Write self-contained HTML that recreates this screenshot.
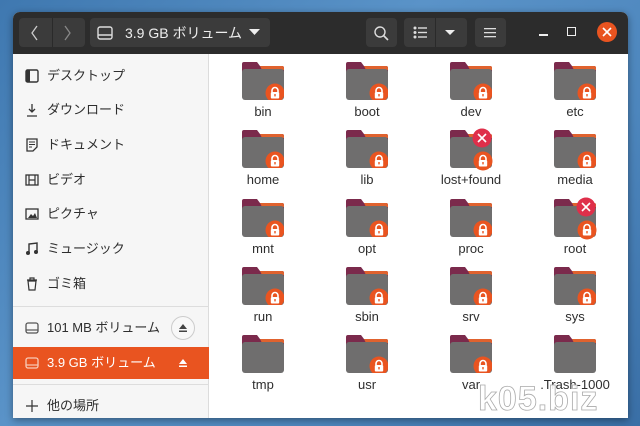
<!DOCTYPE html>
<html><head><meta charset="utf-8">
<style>
*{margin:0;padding:0;box-sizing:border-box}
body{width:640px;height:426px;overflow:hidden;background:linear-gradient(135deg,#3f78b0,#5a93c8 40%,#4d86bd 70%,#3a6fa6);font-family:"Liberation Sans","Noto Sans CJK JP",sans-serif;position:relative}
.win{position:absolute;left:13px;top:12px;width:615px;height:406px;border-radius:7px 7px 0 0;overflow:hidden;background:#fff;box-shadow:0 2px 8px rgba(0,0,0,.4)}
.hdr{position:absolute;left:0;top:0;width:615px;height:42px;background:#2c2c2c}
.btn{position:absolute;top:6px;height:29px;background:#3b3b3b;border-radius:4px}
.side{position:absolute;left:0;top:42px;width:196px;height:364px;background:#f6f6f6;border-right:1px solid #dcdcdc}
.it{position:absolute;left:0;width:196px;height:34px;font-size:13px;color:#2e2e2e;line-height:34px}
.it .t{position:absolute;left:34px}
.it svg{position:absolute;left:12px;top:10px}
.f{position:absolute;width:104px;text-align:center;font-size:13px;color:#2e2e2e}
.f svg{display:block;margin:0 auto 4px}
</style></head><body>
<svg width="0" height="0" style="position:absolute">
<symbol id="fo" viewBox="0 0 42 38">
<path d="M2 0h13l3 4h22a2 2 0 0 1 2 2v10H0V2a2 2 0 0 1 2-2z" fill="#7b2a4c"/>
<path d="M18 4h22a2 2 0 0 1 2 2v2H20z" fill="#e0622e"/>
<rect x="0" y="7" width="42" height="31" rx="3" fill="#6f6e6e"/>
</symbol>
<symbol id="lk" viewBox="0 0 20 20">
<circle cx="10" cy="10" r="9.5" fill="#e95420"/>
<path d="M7 9V7.5a3 3 0 0 1 6 0V9" stroke="#fff" stroke-width="1.6" fill="none"/>
<rect x="5.8" y="9" width="8.4" height="6.5" rx="1" fill="#fff"/>
<rect x="9.3" y="11" width="1.4" height="2.4" fill="#e95420"/>
</symbol>
<symbol id="xx" viewBox="0 0 20 20">
<circle cx="10" cy="10" r="9.5" fill="#df2f4a"/>
<path d="M6 6l8 8M14 6l-8 8" stroke="#fff" stroke-width="1.6"/>
</symbol>
</svg>
<div class="win">
<div class="hdr">
 <div class="btn" style="left:6px;width:66px"></div>
 <div style="position:absolute;left:39px;top:6px;width:1px;height:29px;background:#2a2a2a"></div>
 <svg style="position:absolute;left:17px;top:13px" width="10" height="16"><path d="M7 1L2 8l5 7" stroke="#ccc" stroke-width="1.3" fill="none"/></svg>
 <svg style="position:absolute;left:49px;top:13px" width="10" height="16"><path d="M3 1l5 7-5 7" stroke="#888" stroke-width="1.3" fill="none"/></svg>
 <div class="btn" style="left:77px;width:180px"></div>
 <svg style="position:absolute;left:84px;top:14px" width="16" height="14"><rect x="1" y="1" width="14" height="12" rx="2" stroke="#ddd" stroke-width="1.4" fill="none"/><path d="M1 9h14" stroke="#ddd" stroke-width="1.4"/></svg>
 <div style="position:absolute;left:112px;top:11px;color:#eee;font-size:14px">3.9 GB ボリューム</div>
 <svg style="position:absolute;left:236px;top:17px" width="11" height="7"><path d="M0 0h11L5.5 6z" fill="#eee"/></svg>
 <div class="btn" style="left:353px;width:31px"></div>
 <svg style="position:absolute;left:360px;top:13px" width="16" height="16"><circle cx="7" cy="7" r="5" stroke="#ddd" stroke-width="1.4" fill="none"/><path d="M10.5 10.5L15 15" stroke="#ddd" stroke-width="1.6"/></svg>
 <div class="btn" style="left:391px;width:63px"></div>
 <div style="position:absolute;left:422px;top:6px;width:1px;height:29px;background:#2a2a2a"></div>
 <svg style="position:absolute;left:400px;top:14px" width="14" height="13"><g fill="#ddd"><circle cx="2" cy="2" r="1.5"/><circle cx="2" cy="6.5" r="1.5"/><circle cx="2" cy="11" r="1.5"/><rect x="5" y="1.3" width="9" height="1.4"/><rect x="5" y="5.8" width="9" height="1.4"/><rect x="5" y="10.3" width="9" height="1.4"/></g></svg>
 <svg style="position:absolute;left:432px;top:18px" width="10" height="6"><path d="M0 0h10L5 5z" fill="#eee"/></svg>
 <div class="btn" style="left:462px;width:31px"></div>
 <svg style="position:absolute;left:471px;top:15px" width="12" height="11"><g fill="#ddd"><rect y="1" width="12" height="1.3"/><rect y="5" width="12" height="1.3"/><rect y="9" width="12" height="1.3"/></g></svg>
 <div style="position:absolute;left:526px;top:22px;width:9px;height:1.5px;background:#eee"></div>
 <div style="position:absolute;left:554px;top:15px;width:9px;height:9px;border:1.5px solid #eee"></div>
 <div style="position:absolute;left:584px;top:10px;width:20px;height:20px;border-radius:50%;background:#e95420"></div>
 <svg style="position:absolute;left:589px;top:15px" width="10" height="10"><path d="M1 1l8 8M9 1l-8 8" stroke="#fff" stroke-width="1.6"/></svg>
</div>
<div class="side">
 <div class="it" style="top:5px"><svg width="14" height="14"><rect x="1" y="1" width="12" height="12" rx="1.5" stroke="#333" stroke-width="1.4" fill="none"/><rect x="1" y="1" width="4" height="12" fill="#333"/></svg><span class="t">デスクトップ</span></div>
 <div class="it" style="top:39px"><svg width="14" height="14"><path d="M7 1v8M4 6l3 3 3-3M2 13h10" stroke="#333" stroke-width="1.3" fill="none"/></svg><span class="t">ダウンロード</span></div>
 <div class="it" style="top:74px"><svg width="14" height="14"><path d="M2 1h10v8l-4 4H2z" stroke="#333" stroke-width="1.3" fill="none"/><path d="M4 4h6M4 6.5h6M4 9h3" stroke="#333" stroke-width="1.1"/></svg><span class="t">ドキュメント</span></div>
 <div class="it" style="top:109px"><svg width="14" height="14"><rect x="1" y="2" width="12" height="10" stroke="#333" stroke-width="1.3" fill="none"/><path d="M4 2v10M10 2v10M4 7h6" stroke="#333" stroke-width="1.2"/></svg><span class="t">ビデオ</span></div>
 <div class="it" style="top:143px"><svg width="14" height="14"><rect x="1" y="2" width="12" height="10" stroke="#333" stroke-width="1.3" fill="none"/><path d="M3 11l3-4 2 2 2-3 2 5z" fill="#333"/></svg><span class="t">ピクチャ</span></div>
 <div class="it" style="top:178px"><svg width="14" height="14"><path d="M4 11V2l8-1v9" stroke="#333" stroke-width="1.4" fill="none"/><circle cx="3" cy="11" r="2" fill="#333"/><circle cx="11" cy="10" r="2" fill="#333"/></svg><span class="t">ミュージック</span></div>
 <div class="it" style="top:213px"><svg width="14" height="14"><path d="M3 4h8l-1 9H4zM2 3h10M5 3V1h4v2" stroke="#333" stroke-width="1.2" fill="none"/></svg><span class="t">ゴミ箱</span></div>
 <div style="position:absolute;left:0;top:252px;width:196px;height:1px;background:#ddd"></div>
 <div class="it" style="top:257px"><svg width="14" height="14"><rect x="1" y="2" width="12" height="10" rx="2" stroke="#555" stroke-width="1.3" fill="none"/><path d="M1 9h12" stroke="#555" stroke-width="1.2"/></svg><span class="t">101 MB ボリューム</span>
  <div style="position:absolute;left:158px;top:5px;width:24px;height:24px;border-radius:50%;border:1px solid #ccc;background:#f8f8f8"></div>
  <svg style="position:absolute;left:165px;top:12px" width="10" height="10"><path d="M5 1l4 5H1z M1 7.5h8v1.5H1z" fill="#444"/></svg></div>
 <div class="it" style="top:293px;height:32px;background:#e95420;color:#fff;line-height:32px"><svg width="14" height="14" style="top:9px"><rect x="1" y="2" width="12" height="10" rx="2" stroke="#f8cbb8" stroke-width="1.3" fill="none"/><path d="M1 9h12" stroke="#f8cbb8" stroke-width="1.2"/></svg><span class="t">3.9 GB ボリューム</span>
  <svg style="position:absolute;left:165px;top:11px" width="10" height="10"><path d="M5 1l4 5H1z M1 7.5h8v1.5H1z" fill="#fff"/></svg></div>
 <div style="position:absolute;left:0;top:330px;width:196px;height:1px;background:#ddd"></div>
 <div class="it" style="top:335px"><svg width="14" height="14"><path d="M7 1v12M1 7h12" stroke="#333" stroke-width="1.2"/></svg><span class="t">他の場所</span></div>
</div>
</div>
<div class="f" style="left:211px;top:62px"><svg width="42" height="38"><use href="#fo"/><use href="#lk" x="23" y="21" width="20" height="20"/></svg>bin</div>
<div class="f" style="left:315px;top:62px"><svg width="42" height="38"><use href="#fo"/><use href="#lk" x="23" y="21" width="20" height="20"/></svg>boot</div>
<div class="f" style="left:419px;top:62px"><svg width="42" height="38"><use href="#fo"/><use href="#lk" x="23" y="21" width="20" height="20"/></svg>dev</div>
<div class="f" style="left:523px;top:62px"><svg width="42" height="38"><use href="#fo"/><use href="#lk" x="23" y="21" width="20" height="20"/></svg>etc</div>
<div class="f" style="left:211px;top:130px"><svg width="42" height="38"><use href="#fo"/><use href="#lk" x="23" y="21" width="20" height="20"/></svg>home</div>
<div class="f" style="left:315px;top:130px"><svg width="42" height="38"><use href="#fo"/><use href="#lk" x="23" y="21" width="20" height="20"/></svg>lib</div>
<div class="f" style="left:419px;top:130px"><svg width="42" height="38" style="overflow:visible"><use href="#fo"/><use href="#lk" x="23" y="21" width="20" height="20"/><use href="#xx" x="22" y="-2" width="20" height="20"/></svg>lost+found</div>
<div class="f" style="left:523px;top:130px"><svg width="42" height="38"><use href="#fo"/><use href="#lk" x="23" y="21" width="20" height="20"/></svg>media</div>
<div class="f" style="left:211px;top:199px"><svg width="42" height="38"><use href="#fo"/><use href="#lk" x="23" y="21" width="20" height="20"/></svg>mnt</div>
<div class="f" style="left:315px;top:199px"><svg width="42" height="38"><use href="#fo"/><use href="#lk" x="23" y="21" width="20" height="20"/></svg>opt</div>
<div class="f" style="left:419px;top:199px"><svg width="42" height="38"><use href="#fo"/><use href="#lk" x="23" y="21" width="20" height="20"/></svg>proc</div>
<div class="f" style="left:523px;top:199px"><svg width="42" height="38" style="overflow:visible"><use href="#fo"/><use href="#lk" x="23" y="21" width="20" height="20"/><use href="#xx" x="22" y="-2" width="20" height="20"/></svg>root</div>
<div class="f" style="left:211px;top:267px"><svg width="42" height="38"><use href="#fo"/><use href="#lk" x="23" y="21" width="20" height="20"/></svg>run</div>
<div class="f" style="left:315px;top:267px"><svg width="42" height="38"><use href="#fo"/><use href="#lk" x="23" y="21" width="20" height="20"/></svg>sbin</div>
<div class="f" style="left:419px;top:267px"><svg width="42" height="38"><use href="#fo"/><use href="#lk" x="23" y="21" width="20" height="20"/></svg>srv</div>
<div class="f" style="left:523px;top:267px"><svg width="42" height="38"><use href="#fo"/><use href="#lk" x="23" y="21" width="20" height="20"/></svg>sys</div>
<div class="f" style="left:211px;top:335px"><svg width="42" height="38"><use href="#fo"/></svg>tmp</div>
<div class="f" style="left:315px;top:335px"><svg width="42" height="38"><use href="#fo"/><use href="#lk" x="23" y="21" width="20" height="20"/></svg>usr</div>
<div class="f" style="left:419px;top:335px"><svg width="42" height="38"><use href="#fo"/><use href="#lk" x="23" y="21" width="20" height="20"/></svg>var</div>
<div class="f" style="left:523px;top:335px"><svg width="42" height="38"><use href="#fo"/></svg>.Trash-1000</div>
<div style="position:absolute;left:478px;top:380px;font-size:34px;font-weight:bold;color:rgba(255,255,255,.9);-webkit-text-stroke:0.8px #aaa;letter-spacing:1px">k05.biz</div>
</body></html>
